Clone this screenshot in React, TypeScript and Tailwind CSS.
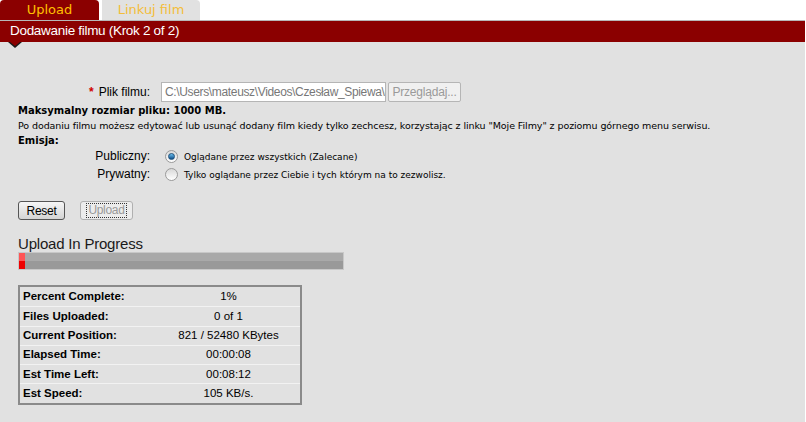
const rows = [
  ["Percent Complete:", "1%"],
  ["Files Uploaded:", "0 of 1"],
  ["Current Position:", "821 / 52480 KBytes"],
  ["Elapsed Time:", "00:00:08"],
  ["Est Time Left:", "00:08:12"],
  ["Est Speed:", "105 KB/s."],
];

const Radio = ({ checked }: { checked?: boolean }) => (
  <span className="w-[13px] h-[13px] rounded-full border border-[#9a9a9a] bg-gradient-to-b from-[#d8d8d8] to-[#ffffff] flex items-center justify-center">
    {checked && (
      <span className="w-[7px] h-[7px] rounded-full bg-gradient-to-b from-[#6cc0ef] to-[#0b4f8a] border border-[#1d4f7a]" />
    )}
  </span>
);

export default function App() {
  return (
    <div className="w-[806px] h-[422px] bg-white font-['Liberation_Sans',Arial,sans-serif] text-black overflow-hidden">
      {/* Tabs */}
      <div className="flex gap-[3px] h-[20px] items-end">
        <div className="w-[99px] h-[20px] bg-[#8b0000] rounded-t-[4px] flex items-center justify-center text-[13px] text-[#ffc000] font-['DejaVu_Sans',sans-serif]">
          Upload
        </div>
        <div className="w-[98px] h-[20px] bg-[#e1e1e1] rounded-tr-[4px] flex items-center justify-center text-[13px] text-[#f3bd3a] font-['DejaVu_Sans',sans-serif]">
          Linkuj film
        </div>
      </div>

      {/* Header */}
      <div className="w-[805px] h-[22px] bg-[#8b0000] border-t border-[#b8b8b8] text-white text-[13.5px] pl-[10px] flex items-center tracking-[-0.3px]">
        Dodawanie filmu (Krok 2 of 2)
      </div>

      {/* Content */}
      <div className="relative w-[805px] h-[380px] bg-[#e1e1e1] pl-[18px] pt-[40px]">
        <div className="absolute left-[8px] top-0 w-0 h-0 border-l-[7px] border-r-[7px] border-t-[6px] border-l-transparent border-r-transparent border-t-[#1a1a1a]" />
        <div className="absolute left-[10px] top-0 w-0 h-0 border-l-[5px] border-r-[5px] border-t-[4px] border-l-transparent border-r-transparent border-t-[#8b0000]" />

        {/* File row */}
        <div className="flex items-center h-[20px]">
          <div className="w-[132px] text-right text-[12px]">
            <span className="text-[#d00000] font-bold mr-[5px]">*</span>Plik filmu:
          </div>
          <div className="ml-[11px] w-[225px] h-[20px] bg-white border border-[#b5b5b5] text-[12px] text-[#777] px-[3px] leading-[18px] tracking-[-0.35px] whitespace-nowrap overflow-hidden">
            C:\Users\mateusz\Videos\Czesław_Spiewa\(
          </div>
          <div className="ml-[2px] w-[73px] h-[20px] bg-[#f0f0f0] border border-[#b5b5b5] rounded-[2px] text-[12px] tracking-[-0.2px] text-[#9a9a9a] flex items-center justify-center">
            Przeglądaj...
          </div>
        </div>

        <div className="mt-[1px] font-['DejaVu_Sans',sans-serif] text-[9.5px] leading-[15px]">
          <div className="font-bold text-[10px]">Maksymalny rozmiar pliku: 1000 MB.</div>
          <div className="tracking-[-0.08px]">
            Po dodaniu filmu możesz edytować lub usunąć dodany film kiedy tylko zechcesz, korzystając z linku "Moje Filmy" z poziomu górnego menu serwisu.
          </div>
          <div className="font-bold text-[10px]">Emisja:</div>
        </div>

        {/* Radios */}
        <div className="mt-[2px] flex flex-col gap-[5px]">
          <div className="flex items-center h-[13px] leading-[13px]">
            <div className="w-[132px] text-right text-[12px]">Publiczny:</div>
            <div className="ml-[15px]"><Radio checked /></div>
            <span className="ml-[6px] text-[9px] font-['DejaVu_Sans',sans-serif] mt-[2px]">
              Oglądane przez wszystkich (Zalecane)
            </span>
          </div>
          <div className="flex items-center h-[13px] leading-[13px]">
            <div className="w-[132px] text-right text-[12px]">Prywatny:</div>
            <div className="ml-[15px]"><Radio /></div>
            <span className="ml-[6px] text-[9px] font-['DejaVu_Sans',sans-serif] mt-[2px]">
              Tylko oglądane przez Ciebie i tych którym na to zezwolisz.
            </span>
          </div>
        </div>

        {/* Buttons */}
        <div className="mt-[20px] flex items-center gap-[15px]">
          <div className="w-[47px] h-[19px] rounded-[3px] border border-[#555] bg-gradient-to-b from-[#f6f6f6] to-[#d4d4d4] text-[12px] tracking-[-0.3px] flex items-center justify-center">
            Reset
          </div>
          <div className="w-[53px] h-[19px] rounded-[3px] border border-[#b0b0b0] bg-[#ececec] text-[12px] tracking-[-0.3px] text-[#9a9a9a] flex items-center justify-center">
            <span className="border border-dotted border-[#333] px-[1px] leading-[13px]">Upload</span>
          </div>
        </div>

        {/* Progress */}
        <div className="mt-[15px] text-[15px] text-[#1a1a1a] leading-[17px] tracking-[-0.2px]">Upload In Progress</div>
        <div className="w-[326px] h-[18px] border border-[#c8c8c8] flex flex-col relative">
          <div className="h-[8px] bg-[#a9a9a9]" />
          <div className="flex-1 bg-[#999999]" />
          <div className="absolute left-0 top-0 w-[6px] h-full flex flex-col">
            <div className="h-[8px] bg-[#ff5555]" />
            <div className="flex-1 bg-[#ee0000]" />
          </div>
        </div>

        {/* Stats table */}
        <div className="mt-[15px] w-[284px] border-2 border-[#8a8a8a]">
          {rows.map(([k, v], i) => (
            <div
              key={k}
              className={`flex items-center h-[19.3px] text-[11.5px] ${i > 0 ? "border-t border-[#f2f2f2]" : ""}`}
            >
              <div className="w-[145px] pl-[3px] font-bold">{k}</div>
              <div className="flex-1 text-center pr-[8px]">{v}</div>
            </div>
          ))}
        </div>
      </div>
    </div>
  );
}
